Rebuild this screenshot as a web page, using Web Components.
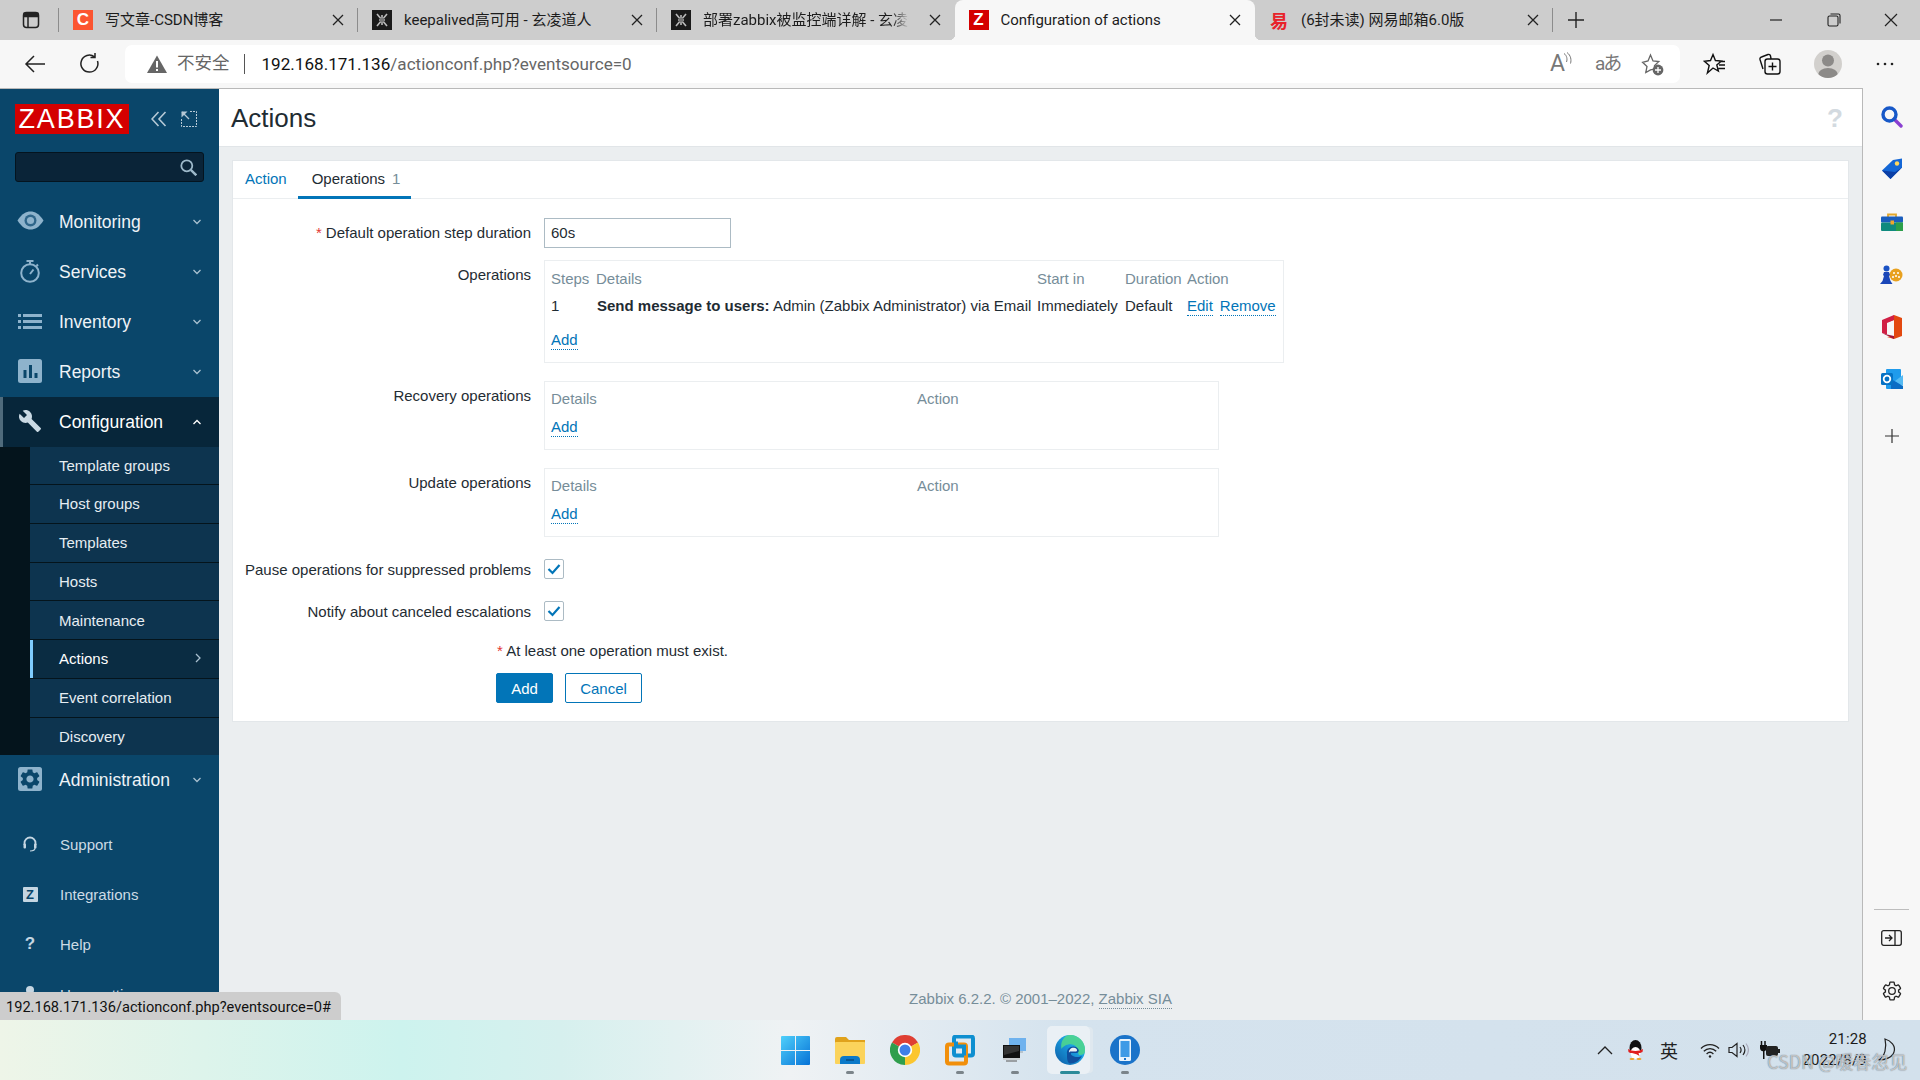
<!DOCTYPE html>
<html lang="en"><head><meta charset="utf-8"><title>Configuration of actions</title>
<style>
html,body{margin:0;padding:0;width:1920px;height:1080px;overflow:hidden;background:#fff}
svg{display:block}
</style></head><body>
<desktop-shell>
  <browser-tabs>
    <tab-side>
      <svg width="20" height="20" viewBox="0 0 20 20" fill="none" stroke="#222" stroke-width="1.5"><rect x="2.5" y="2.5" width="15" height="15" rx="3"/><path d="M3 6.5h14M7 6.5v11" /><path d="M2.5 2.5h15v4h-15z" fill="#222" stroke="none"/></svg>
    </tab-side>
    <browser-tab sep style="width:299px"><span slot="icon" style="display:flex;width:20px;height:20px;background:#fc5531;color:#fff;font:bold 17px 'Liberation Sans';align-items:center;justify-content:center">C</span>写文章-CSDN博客</browser-tab>
    <browser-tab sep style="width:299px"><svg slot="icon" width="20" height="20" viewBox="0 0 20 20"><rect width="20" height="20" fill="#1b1b1b"/><path d="M5 4l10 12M15 4L5 16M7 10h6M10 5v10" stroke="#bbb" stroke-width="1.6" fill="none"/><circle cx="10" cy="10" r="2.4" fill="#777"/></svg>keepalived高可用 - 玄凌道人</browser-tab>
    <browser-tab fade style="width:297.5px"><svg slot="icon" width="20" height="20" viewBox="0 0 20 20"><rect width="20" height="20" fill="#1b1b1b"/><path d="M5 4l10 12M15 4L5 16M7 10h6M10 5v10" stroke="#bbb" stroke-width="1.6" fill="none"/><circle cx="10" cy="10" r="2.4" fill="#777"/></svg>部署zabbix被监控端详解 - 玄凌道人</browser-tab>
    <browser-tab active style="width:300.5px"><span slot="icon" style="display:flex;width:20px;height:20px;background:#d40000;color:#fff;font:bold 17px 'Liberation Sans';align-items:center;justify-content:center">Z</span>Configuration of actions</browser-tab>
    <browser-tab sep style="width:298px"><span slot="icon" style="display:flex;width:20px;height:20px;color:#e8232a;font:bold 18px 'Noto Sans CJK SC';align-items:center;justify-content:center;line-height:20px">易</span>(6封未读) 网易邮箱6.0版</browser-tab>
    <tab-new>
      <svg width="18" height="18" viewBox="0 0 18 18" stroke="#222" stroke-width="1.4"><path d="M9 1v16M1 9h16"/></svg>
    </tab-new>
    <window-controls>
      <svg width="14" height="14" viewBox="0 0 14 14" stroke="#222" stroke-width="1.2"><path d="M1 7h12"/></svg>
      <svg width="14" height="14" viewBox="0 0 14 14" stroke="#222" stroke-width="1.1" fill="none"><rect x="1" y="3" width="10" height="10" rx="1.5"/><path d="M3.5 1h8a1.5 1.5 0 0 1 1.5 1.5v8"/></svg>
      <svg width="14" height="14" viewBox="0 0 14 14" stroke="#222" stroke-width="1.2"><path d="M1 1l12 12M13 1L1 13"/></svg>
    </window-controls>
  </browser-tabs>

  <browser-toolbar>
    <tool-btn style="margin-left:13px"><svg width="24" height="24" viewBox="0 0 24 24" fill="none" stroke="#222" stroke-width="1.5"><path d="M22 12H3M11 4l-8 8 8 8"/></svg></tool-btn>
    <tool-btn style="margin-left:11px"><svg width="24" height="24" viewBox="0 0 24 24" fill="none" stroke="#222" stroke-width="1.5"><path d="M19.5 9a8.5 8.5 0 1 1-3-4.2M17 1v4.5h-4.5"/></svg></tool-btn>
    <address-box>
      <svg slot="warn" width="20" height="18" viewBox="0 0 20 18"><path d="M10 0.5L20 18H0z" fill="#666"/><path d="M9 6h2v6.5H9zM9 14h2v2H9z" fill="#fff"/></svg>
      <span slot="insecure">不安全</span>
      <span slot="url"><span style="color:#111">192.168.171.136</span>/actionconf.php?eventsource=0</span>
      <span slot="tools" style="display:flex;width:24px;height:24px;position:relative;color:#777;font:23px/24px Roboto,'Liberation Sans'"><span>A</span><svg width="9" height="15" viewBox="0 0 9 15" fill="none" stroke="#777" style="margin-left:-2px"><path d="M1 1.500c3 2 3.500 6 2.500 8.500M4 .5c4 3 4.500 7.500 3.500 11"/></svg></span>
      <span slot="tools" style="color:#777;font:19px/24px Roboto,'Noto Sans CJK JP',sans-serif;width:24px;white-space:nowrap;letter-spacing:-2px">aあ</span>
      <svg slot="tools" width="24" height="24" viewBox="0 0 24 24" fill="none" stroke="#666" stroke-width="1.3"><path d="M10.5 3l2.5 6 5.8.6-4.3 4 .8 3-2.8.8-2 .5-4.7 2.6 1.2-6-4.4-4.2L8 9z"/><circle cx="18" cy="18" r="5.4" fill="#666" stroke="none"/><path d="M18 15v6M15 18h6" stroke="#fff"/></svg>
    </address-box>
    <tool-btn style="margin-left:13px"><svg width="24" height="24" viewBox="0 0 24 24" fill="none" stroke="#111" stroke-width="1.4"><path d="M10 2.500l2.400 6 6 .5-4.600 4 1.600 6L10 16l-5.600 5 1.800-7.500L1.500 9.300l6-.8zM16 9.500h6M16 13h6M15.500 16.500h6.500"/></svg></tool-btn>
    <tool-btn style="margin-left:11px"><svg width="24" height="24" viewBox="0 0 24 24" fill="none" stroke="#111" stroke-width="1.4"><rect x="7" y="7" width="15" height="15" rx="2.500"/><path d="M14.500 10.500v8M10.500 14.500h8M5 17L2 7.500a2 2 0 0 1 1.500-2.500L10 2.500a2 2 0 0 1 2.500 1.500l.6 3"/></svg></tool-btn>
    <tool-btn style="margin-left:14px"><svg width="28" height="28" viewBox="0 0 28 28"><defs><clipPath id="av"><circle cx="14" cy="14" r="14"/></clipPath></defs><circle cx="14" cy="14" r="14" fill="#d2d0cd"/><g clip-path="url(#av)" fill="#8c8a88"><circle cx="14" cy="10.500" r="6"/><ellipse cx="14" cy="25" rx="10" ry="7"/></g></svg></tool-btn>
    <tool-btn style="margin-left:13px"><svg width="18" height="4" viewBox="0 0 18 4" fill="#222"><circle cx="2" cy="2" r="1.300"/><circle cx="9" cy="2" r="1.300"/><circle cx="16" cy="2" r="1.300"/></svg></tool-btn>
  </browser-toolbar>

  <browser-body>
    <zbx-page>
      <zbx-sidebar>
        <zbx-brand>
          <svg slot="collapse" width="16" height="16" viewBox="0 0 16 16" fill="none" stroke="#b6c9d6" stroke-width="1.600"><path d="M7.500 1L1 8l6.500 7M14.500 1L8 8l6.500 7"/></svg>
          <svg slot="kiosk" width="16" height="16" viewBox="0 0 16 16" fill="none" stroke="#b6c9d6"><path d="M9 .5h6.500V15.500H.5V8" stroke-dasharray="2 1"/><path d="M1 1l7 7" stroke-width="1.300"/><path d="M.5 .5h6L.5 6.500z" fill="#b6c9d6" stroke="none"/></svg>
        </zbx-brand>
        <zbx-search><svg width="17" height="17" viewBox="0 0 17 17" fill="none" stroke="#9db9ca" stroke-width="1.800"><circle cx="6.800" cy="6.800" r="5.500"/><path d="M10.800 10.800l5.500 5.500" stroke-width="2.400"/></svg></zbx-search>
        <zbx-nav>
          <zbx-nav-item chev="down"><svg slot="icon" width="27" height="19" viewBox="0 0 27 19" style="margin-top:-3px"><path d="M.5 9.500C5 2.500 9 .5 13.500 .5S22 2.500 26.500 9.500C22 16.500 18 18.500 13.500 18.500S5 16.500 .5 9.500z" fill="#8eb3cc"/><circle cx="13.500" cy="9.500" r="6" fill="#2f668a"/><circle cx="13.500" cy="9.500" r="3.600" fill="#8eb3cc"/></svg>Monitoring</zbx-nav-item>
          <zbx-nav-item chev="down"><svg slot="icon" width="20" height="23" viewBox="0 0 20 23" fill="none" stroke="#8eb3cc" stroke-width="2" style="margin-top:-2px"><circle cx="10" cy="13" r="8.800"/><path d="M6.500 1h7M10 1v3M10 14l3.500-4.500M16.500 4.500l1.500 1.500" /></svg>Services</zbx-nav-item>
          <zbx-nav-item chev="down"><svg slot="icon" width="24" height="15" viewBox="0 0 24 15" fill="#8eb3cc" style="margin-top:-2px"><path d="M0 0h3v3H0zM5 0h19v3H5zM0 6h3v3H0zM5 6h19v3H5zM0 12h3v3H0zM5 12h19v3H5z"/></svg>Inventory</zbx-nav-item>
          <zbx-nav-item chev="down"><svg slot="icon" width="24" height="24" viewBox="0 0 24 24" style="margin-top:-2px"><rect width="24" height="24" rx="2.500" fill="#8eb3cc"/><path d="M5.500 11h3v8h-3zM11 6h3v13h-3zM16.500 14h3v5h-3z" fill="#0a466a"/></svg>Reports</zbx-nav-item>
          <zbx-nav-item chev="up" active><svg slot="icon" width="24" height="24" viewBox="0 0 24 24" fill="#c9d9e3" style="margin-top:-2px"><path d="M22.700 19l-9.100-9.100c.9-2.300.4-5-1.500-6.900-2-2-5-2.400-7.400-1.300L9 6 6 9 1.600 4.700C.4 7.100.9 10.100 2.900 12.100c1.900 1.900 4.600 2.400 6.900 1.500l9.100 9.100c.4.400 1 .4 1.400 0l2.300-2.300c.5-.4.5-1.100.1-1.400z"/></svg>Configuration</zbx-nav-item>
          <zbx-submenu>
            <zbx-sub-item>Template groups</zbx-sub-item>
            <zbx-sub-item>Host groups</zbx-sub-item>
            <zbx-sub-item>Templates</zbx-sub-item>
            <zbx-sub-item>Hosts</zbx-sub-item>
            <zbx-sub-item>Maintenance</zbx-sub-item>
            <zbx-sub-item current>Actions</zbx-sub-item>
            <zbx-sub-item>Event correlation</zbx-sub-item>
            <zbx-sub-item>Discovery</zbx-sub-item>
          </zbx-submenu>
          <zbx-nav-item chev="down"><svg slot="icon" width="24" height="24" viewBox="0 0 24 24" style="margin-top:-2px"><rect width="24" height="24" rx="2.500" fill="#8eb3cc"/><path fill="#0a466a" d="M19.140 12.940c.04-.3.06-.61.06-.94 0-.32-.02-.64-.07-.94l2.030-1.580c.18-.14.23-.41.12-.61l-1.920-3.320c-.12-.22-.37-.29-.59-.22l-2.390.96c-.5-.38-1.030-.7-1.620-.94l-.36-2.540c-.04-.24-.24-.41-.48-.41h-3.840c-.24 0-.43.17-.47.41l-.36 2.540c-.59.24-1.130.57-1.620.94l-2.390-.96c-.22-.08-.47 0-.59.22L2.740 8.870c-.12.21-.08.47.12.61l2.030 1.580c-.05.3-.09.63-.09.94s.02.64.07.94l-2.030 1.580c-.18.14-.23.41-.12.61l1.920 3.320c.12.22.37.29.59.22l2.390-.96c.5.38 1.030.7 1.620.94l.36 2.540c.05.24.24.41.48.41h3.840c.24 0 .44-.17.47-.41l.36-2.540c.59-.24 1.130-.56 1.620-.94l2.390.96c.22.08.47 0 .59-.22l1.920-3.320c.12-.22.07-.47-.12-.61l-2.010-1.580zM12 15.600c-1.980 0-3.600-1.620-3.600-3.600s1.620-3.600 3.600-3.600 3.600 1.620 3.600 3.600-1.620 3.600-3.600 3.600z"/></svg>Administration</zbx-nav-item>
          <zbx-nav-gap></zbx-nav-gap>
          <zbx-nav-item small><svg slot="icon" width="14" height="16" viewBox="0 0 14 16" fill="none" stroke="#c5d6e2" stroke-width="1.800"><path d="M1.500 9V7a5.500 5.500 0 0 1 11 0v2"/><rect x=".5" y="7.500" width="2.500" height="5" rx="1" fill="#c5d6e2" stroke="none"/><rect x="11" y="7.500" width="2.500" height="5" rx="1" fill="#c5d6e2" stroke="none"/><path d="M12 12c0 2-2 3-5 3" stroke-width="1.200"/></svg>Support</zbx-nav-item>
          <zbx-nav-item small><span slot="icon" style="display:flex;width:15px;height:15px;background:#c5d6e2;color:#0a466a;border-radius:1px;font:bold 13px 'Liberation Sans';align-items:center;justify-content:center">Z</span>Integrations</zbx-nav-item>
          <zbx-nav-item small><span slot="icon" style="color:#c5d6e2;font:bold 17px 'Liberation Sans'">?</span>Help</zbx-nav-item>
          <zbx-nav-item small><svg slot="icon" width="14" height="16" viewBox="0 0 14 16" fill="#c5d6e2"><circle cx="7" cy="4" r="4"/><path d="M0 16c0-5 3-7 7-7s7 2 7 7z"/></svg>User settings</zbx-nav-item>
        </zbx-nav>
      </zbx-sidebar>
      <zbx-main>
        <zbx-header>Actions</zbx-header>
        <zbx-card>
          <zbx-tabs>
            <zbx-tab>Action</zbx-tab>
            <zbx-tab selected count="1">Operations</zbx-tab>
          </zbx-tabs>
          <zbx-form>
            <form-row required label="Default operation step duration" style="margin-top:0"><text-field>60s</text-field></form-row>
            <form-row label="Operations" style="margin-top:12px">
              <op-box style="width:740px;height:103px" variant="full">
                <op-grid cols="45px 441px 88px 62px 1fr" muted><span>Steps</span><span>Details</span><span>Start in</span><span>Duration</span><span>Action</span></op-grid>
                <op-grid cols="45px 441px 88px 62px 1fr" style="margin-top:9px"><span>1</span><span><b style="padding-left:1px">Send message to users:</b> Admin (Zabbix Administrator) via Email</span><span>Immediately</span><span>Default</span><span style="white-space:nowrap"><zbx-link>Edit</zbx-link><zbx-link style="margin-left:7px">Remove</zbx-link></span></op-grid>
                <div style="margin-top:16px"><zbx-link>Add</zbx-link></div>
              </op-box>
            </form-row>
            <form-row label="Recovery operations" style="margin-top:18px">
              <op-box style="width:675px;height:69px">
                <op-grid cols="366px 1fr" muted><span>Details</span><span>Action</span></op-grid>
                <div style="margin-top:10px"><zbx-link>Add</zbx-link></div>
              </op-box>
            </form-row>
            <form-row label="Update operations" style="margin-top:18px">
              <op-box style="width:675px;height:69px">
                <op-grid cols="366px 1fr" muted><span>Details</span><span>Action</span></op-grid>
                <div style="margin-top:10px"><zbx-link>Add</zbx-link></div>
              </op-box>
            </form-row>
            <form-row compact label="Pause operations for suppressed problems" style="margin-top:22px"><check-box></check-box></form-row>
            <form-row compact label="Notify about canceled escalations" style="margin-top:22px"><check-box></check-box></form-row>
            <form-note><span style="color:#e33734">*</span> At least one operation must exist.</form-note>
            <form-actions><zbx-button primary>Add</zbx-button><zbx-button>Cancel</zbx-button></form-actions>
          </zbx-form>
        </zbx-card>
        <zbx-footer>Zabbix 6.2.2. © 2001–2022, <zbx-link footer>Zabbix SIA</zbx-link></zbx-footer>
      </zbx-main>
    </zbx-page>
    <edge-rail>
      <rail-cell><svg width="22" height="22" viewBox="0 0 22 22" fill="none"><path d="M13 13l7 7" stroke="#8a3fd0" stroke-width="3.400" stroke-linecap="round"/><circle cx="8.500" cy="8.500" r="6.500" stroke="#1758c8" stroke-width="3.400"/></svg></rail-cell>
      <rail-cell><svg width="22" height="22" viewBox="0 0 22 22"><path d="M1 12.500L12 2l9-1.500v9L9.500 21z" fill="#1467d6"/><path d="M1 12.500L9.500 21 21 9.500 14 14z" fill="#0b3fa6"/><circle cx="16" cy="5.500" r="2.200" fill="#ffd75e"/></svg></rail-cell>
      <rail-cell><svg width="22" height="18" viewBox="0 0 22 18"><path d="M7 4V1.500h8V4" fill="none" stroke="#e3a72a" stroke-width="1.800"/><rect y="3.500" width="22" height="6" rx="1" fill="#1a5dbd"/><rect y="9.500" width="22" height="8.500" rx="1" fill="#0f8a7e"/><rect x="15" y="9.500" width="7" height="8.500" fill="#2c9f4a"/><rect x="9.500" y="7.500" width="3.500" height="4" fill="#f0a62a"/></svg></rail-cell>
      <rail-cell><svg width="23" height="19" viewBox="0 0 23 19"><circle cx="16" cy="10" r="6.500" fill="#e8a11f"/><g fill="#fff"><circle cx="14" cy="8" r="1"/><circle cx="18" cy="8" r="1"/><circle cx="16" cy="11" r="1"/><circle cx="13" cy="12" r="1"/><circle cx="19" cy="12" r="1"/></g><circle cx="6.500" cy="3.500" r="3" fill="#1a52c4"/><path d="M4 7h5l1 3-1 1 1.500 5 2 3H0l2.500-3L4 11 3 10z" fill="#1a46b8"/></svg></rail-cell>
      <rail-cell><svg width="21" height="24" viewBox="0 0 21 24"><path d="M13 0l8 3v18l-8 3-7-2 7-1V5L7 7z" fill="#e3480f"/><path d="M13 0L1 5v13l5 1.500V8l7-3z" fill="#d12045"/><path d="M6 19.500L1 18l12 6 0-3z" fill="#a3153a"/></svg></rail-cell>
      <rail-cell><svg width="22" height="21" viewBox="0 0 22 21"><rect x="5" y="0" width="15" height="20" rx="1" fill="#1f9bec"/><path d="M10 10l12 7v3H10z" fill="#0b6cc4"/><path d="M22 6l-8 6 8 5z" fill="#55baf2"/><rect y="4" width="12" height="12" rx="1.500" fill="#0672c4"/><circle cx="6" cy="10" r="3.300" fill="none" stroke="#fff" stroke-width="1.800"/></svg></rail-cell>
      <rail-cell style="margin-top:4px"><svg width="16" height="16" viewBox="0 0 16 16" stroke="#333" stroke-width="1.200"><path d="M8 1v14M1 8h14"/></svg></rail-cell>
      <rail-line></rail-line>
      <rail-cell><svg width="21" height="16" viewBox="0 0 21 16" fill="none" stroke="#222" stroke-width="1.300"><rect x=".7" y=".7" width="19.600" height="14.600" rx="2"/><path d="M14 1v14M4 8h7M8 5l3 3-3 3"/></svg></rail-cell>
      <rail-cell><svg width="22" height="22" viewBox="0 0 24 24" fill="none" stroke="#222" stroke-width="1.400"><path d="M19.140 12.940c.04-.3.06-.61.06-.94 0-.32-.02-.64-.07-.94l2.030-1.580c.18-.14.23-.41.12-.61l-1.920-3.320c-.12-.22-.37-.29-.59-.22l-2.390.96c-.5-.38-1.030-.7-1.620-.94l-.36-2.540c-.04-.24-.24-.41-.48-.41h-3.840c-.24 0-.43.17-.47.41l-.36 2.540c-.59.24-1.130.57-1.620.94l-2.390-.96c-.22-.08-.47 0-.59.22L2.740 8.870c-.12.21-.08.47.12.61l2.030 1.580c-.05.3-.09.63-.09.94s.02.64.07.94l-2.030 1.580c-.18.14-.23.41-.12.61l1.920 3.320c.12.22.37.29.59.22l2.390-.96c.5.38 1.030.7 1.620.94l.36 2.540c.05.24.24.41.48.41h3.840c.24 0 .44-.17.47-.41l.36-2.540c.59-.24 1.130-.56 1.620-.94l2.390.96c.22.08.47 0 .59-.22l1.920-3.320c.12-.22.07-.47-.12-.61l-2.010-1.580zM12 15.600c-1.980 0-3.600-1.620-3.600-3.600s1.620-3.600 3.600-3.600 3.600 1.620 3.600 3.600-1.620 3.600-3.600 3.600z"/></svg></rail-cell>
    </edge-rail>
  </browser-body>

  <win-taskbar>
    <task-app><svg width="29" height="29" viewBox="0 0 29 29"><defs><linearGradient id="w" x1="0" y1="0" x2="1" y2="1"><stop offset="0" stop-color="#4fd0fb"/><stop offset="1" stop-color="#0672d6"/></linearGradient></defs><path fill="url(#w)" d="M1 0h13v14H0V1a1 1 0 0 1 1-1zM15 0h13a1 1 0 0 1 1 1v13H15zM0 15h14v14H1a1 1 0 0 1-1-1zM15 15h14v13a1 1 0 0 1-1 1H15z"/></svg></task-app>
    <task-app running><svg width="30" height="27" viewBox="0 0 30 27"><path d="M0 2a2 2 0 0 1 2-2h9l3 3h16v5H0z" fill="#e0a21c"/><rect y="5" width="30" height="22" rx="1" fill="#fbd35b"/><path d="M5 27v-4a4 4 0 0 1 4-4h12a4 4 0 0 1 4 4v4z" fill="#0b79c9"/><path d="M11 23h8" stroke="#06497f" stroke-width="1.400"/></svg></task-app>
    <task-app><svg width="30" height="30" viewBox="0 0 30 30"><path d="M15 15L2 7.500A15 15 0 0 1 28 7.500z" fill="#df3f33"/><path d="M15 15L28 7.500A15 15 0 0 1 15 30z" fill="#fbc62f"/><path d="M15 15L15 30A15 15 0 0 1 2 7.500z" fill="#2f9e4d"/><circle cx="15" cy="15" r="7.200" fill="#fff"/><circle cx="15" cy="15" r="5.500" fill="#3f7fe8"/></svg></task-app>
    <task-app running><svg width="30" height="31" viewBox="0 0 30 31" fill="none"><rect x="9" y="1.500" width="19" height="19" rx="2" stroke="#0e8fd0" stroke-width="4"/><rect x="2" y="9.500" width="19" height="19" rx="2" stroke="#f18f0b" stroke-width="4"/><path d="M11 9.500v-3M9 11.500h10v9" stroke="#0e8fd0" stroke-width="4"/></svg></task-app>
    <task-app running><svg width="24" height="25" viewBox="0 0 24 25"><rect x="6" y="0" width="17" height="13" fill="#6fb2ee"/><path d="M16 13h4v2h-4z" fill="#b8c3cc"/><rect x="0" y="7" width="17" height="13" fill="#111"/><path d="M1 8h15v5L1 17z" fill="#333"/><rect x="0" y="20" width="17" height="2" fill="#c9cdd0"/><rect x="3" y="22" width="11" height="2" fill="#9a9fa3"/></svg></task-app>
    <task-app edge><svg width="30" height="30" viewBox="0 0 30 30"><defs><linearGradient id="e1" x1="0" y1="1" x2="1" y2="0"><stop offset="0" stop-color="#0c59a4"/><stop offset=".6" stop-color="#1ba1e2"/><stop offset="1" stop-color="#37c6d0"/></linearGradient></defs><circle cx="15" cy="15" r="15" fill="url(#e1)"/><path d="M14 0A15 15 0 0 1 30 16c0 3-3 4.500-6 4-2-4-1-8-5-10-5-2-11 1-12.500 4C5 7 9 1 14 0z" fill="#4ed58e" opacity=".9"/><path d="M12 19c-1-6 5-9 9-7 3 1.500 4 5 1 6h-6c-1 2 3 4 6 4 2 0 4-.5 5-1.500-2 5-7 8-12 8-3-1-3-5-3-9.500z" fill="#0f4f9e"/><path d="M14 18c-.5-4 3-6 6-5 2 .5 3 3 1 3.500h-5c-1.500 0-2 .7-2 1.500z" fill="#eaf0f5"/></svg></task-app>
    <task-app running><svg width="30" height="30" viewBox="0 0 30 30"><circle cx="15" cy="15" r="15" fill="#1a73c9"/><rect x="9" y="4" width="12" height="22" rx="1.500" fill="#e8f3fc"/><rect x="10.500" y="6" width="9" height="16" fill="#3f9be6"/><rect x="14" y="23" width="2" height="2" fill="#1a73c9"/></svg></task-app>
    <sys-tray>
      <tray-cell style="width:30px"><svg width="16" height="9" viewBox="0 0 16 9" fill="none" stroke="#222" stroke-width="1.300"><path d="M1 8l7-7 7 7"/></svg></tray-cell>
      <tray-cell style="width:30px"><svg width="17" height="20" viewBox="0 0 17 20"><ellipse cx="8.500" cy="8" rx="6" ry="8" fill="#111"/><ellipse cx="8.500" cy="13" rx="5" ry="6" fill="#fff"/><path d="M1 9c4 2.500 11 2.500 15 0l-.5 3c-2 1-3 1-4 1l1 3-3-1.800L5 13c-1 0-2.500 0-3.500-1z" fill="#e02020"/><ellipse cx="5" cy="19" rx="2.500" ry="1" fill="#f0a020"/><ellipse cx="12" cy="19" rx="2.500" ry="1" fill="#f0a020"/></svg></tray-cell>
      <tray-cell style="width:38px;font:18px 'Noto Sans CJK SC',sans-serif;color:#222">英</tray-cell>
      <tray-cell style="width:28px;margin-left:8px"><svg width="20" height="15" viewBox="0 0 20 15" fill="none" stroke="#222" stroke-width="1.300"><path d="M1 5.500c5-5.300 13-5.300 18 0M3.800 8.300c3.500-3.600 8.900-3.600 12.400 0M6.600 11c2-2 4.800-2 6.800 0"/><circle cx="10" cy="13.500" r="1.200" fill="#222" stroke="none"/></svg></tray-cell>
      <tray-cell style="width:28px"><svg width="21" height="16" viewBox="0 0 21 16" fill="none" stroke="#222" stroke-width="1.200"><path d="M1 5.500h3L9 1.500v13L4 10.500H1z"/><path d="M12 5c1.300 1.800 1.300 4.200 0 6M15 3c2.300 3 2.300 7 0 10"/><path d="M18 1.500c3 4 3 9 0 13" stroke="#aab"/></svg></tray-cell>
      <tray-cell style="width:36px"><svg width="20" height="18" viewBox="0 0 20 18"><path d="M1.500 0v4M5 0v4" stroke="#111" stroke-width="1.500"/><path d="M0 4h7v3a3.500 3.500 0 0 1-2.500 3.300V18H3v-7.700A3.500 3.500 0 0 1 0 7z" fill="#111"/><rect x="6" y="5" width="12" height="10" rx="2" fill="#222"/><rect x="18" y="8" width="2" height="4" fill="#222"/></svg></tray-cell>
      <tray-clock><span>21:28</span><span>2022/8/9</span></tray-clock>
    </sys-tray>
    <svg data-moon width="22" height="26" viewBox="0 0 22 26" fill="none" stroke="#222" stroke-width="1.200" style="position:absolute;left:1876px;top:18px"><path d="M9 1c6 1.500 11 7 9 13-1.500 5-8 8-15.500 8C9 19 11 9 9 1z"/></svg>
  </win-taskbar>

  <status-bubble>192.168.171.136/actionconf.php?eventsource=0#</status-bubble>
  <csdn-mark>CSDN @暖春忽见</csdn-mark>
</desktop-shell>

<script>
const UI='Roboto,"Noto Sans CJK SC",sans-serif';
const ZB='"Liberation Sans","Noto Sans CJK SC",sans-serif';
function make(name,css,html='<slot></slot>'){
  const t=document.createElement('template');
  t.innerHTML=`<style>${css}</style>${html}`;
  customElements.define(name,class extends HTMLElement{
    constructor(){super();this.attachShadow({mode:'open'}).appendChild(t.content.cloneNode(true));}
    connectedCallback(){
      const s=this.shadowRoot;
      s.querySelectorAll('[data-attr]').forEach(n=>{n.textContent=this.getAttribute(n.dataset.attr)||''});
      if(this.hasAttribute('cols'))this.style.gridTemplateColumns=this.getAttribute('cols');
    }
  });
}
const close='<svg class="x" width="12" height="12" viewBox="0 0 12 12" stroke="#222" stroke-width="1.300"><path d="M1 1l10 10M11 1L1 11"/></svg>';

make('desktop-shell',`:host{display:flex;flex-direction:column;position:relative;width:1920px;height:1080px;overflow:hidden;font-family:${ZB}}`);
make('browser-tabs',`:host{display:flex;height:40px;background:#cdcdcd;font:15px ${UI};color:#1c1c1c}`);
make('tab-side',`:host{display:flex;width:59px;height:40px;align-items:center;padding-left:21px;box-sizing:border-box;position:relative}
 :host::after{content:"";position:absolute;right:0;top:8px;height:24px;width:1px;background:#8c8c8c}`);
make('browser-tab',`:host{display:block;height:40px;box-sizing:border-box;position:relative;flex:none}
 .t{display:flex;align-items:center;height:100%;padding:0 14px;box-sizing:border-box;gap:12px}
 .fav{width:20px;height:20px;flex:none;display:block}
 .title{flex:1;min-width:0;overflow:hidden;white-space:nowrap;line-height:20px;height:20px;margin-top:-1px}
 .x{flex:none;margin-left:8px;margin-right:0}
 :host([sep]) .t::after{content:"";position:absolute;right:0;top:8px;height:24px;width:1px;background:#8c8c8c}
 :host([fade]) .title{-webkit-mask-image:linear-gradient(90deg,#000 92%,transparent);mask-image:linear-gradient(90deg,#000 92%,transparent)}
 :host([active]){background:#f7f7f7;border-radius:8px 8px 0 0}
 :host([active])::before,:host([active])::after{content:"";position:absolute;bottom:0;width:6px;height:6px}
 :host([active])::before{left:-6px;background:radial-gradient(circle at 0 0,transparent 6px,#f7f7f7 6.500px)}
 :host([active])::after{right:-6px;background:radial-gradient(circle at 100% 0,transparent 6px,#f7f7f7 6.500px)}`,
 `<div class="t"><span class="fav"><slot name="icon"></slot></span><span class="title"><slot></slot></span>${close}</div>`);
make('tab-new',`:host{display:flex;width:45px;height:40px;align-items:center;justify-content:center}`);
make('window-controls',`:host{display:flex;margin-left:auto;width:129px;height:40px;align-items:center;justify-content:space-between;padding:0 22px 0 0;box-sizing:content-box}
 ::slotted(svg){width:14px}`);
make('browser-toolbar',`:host{display:flex;height:48px;background:#f7f7f7;align-items:flex-start;padding-top:5px;box-sizing:border-box}`);
make('tool-btn',`:host{display:flex;width:44px;height:38px;align-items:center;justify-content:center;flex:none}`);
make('address-box',`:host{display:flex;align-items:center;width:1555px;height:38px;margin-left:13px;background:#fff;border-radius:7px;box-sizing:border-box;padding:0 16px 0 22px;font:17.100px/24px ${UI};color:#666;flex:none}
 .ins{margin-left:10px;color:#666;font-size:17.500px;height:24px;margin-top:-2px}
 .bar{width:1px;height:20px;background:#555;margin:0 17px 0 14px}
 .sp{flex:1}
 .tools{display:flex;gap:21px;align-items:center}`,
 `<slot name="warn"></slot><span class="ins"><slot name="insecure"></slot></span><span class="bar"></span><slot name="url"></slot><span class="sp"></span><span class="tools"><slot name="tools"></slot></span>`);
make('browser-body',`:host{display:flex;height:932px;background:#f7f7f7}`);
make('zbx-page',`:host{display:flex;width:1863px;height:932px;box-sizing:border-box;border-top:1px solid #b9b9b9;border-right:1px solid #b9b9b9;flex:none}`);
make('zbx-sidebar',`:host{display:block;width:219px;flex:none;background:#0a466a;overflow:hidden;color:#f2f6f9}`);
make('zbx-brand',`:host{display:flex;align-items:center;padding:15px 0 0 15px}
 .logo{display:block;width:114px;height:30px;background:#d40000;color:#fff;font:27px/31px "Liberation Sans",sans-serif;letter-spacing:1.800px;text-align:center;flex:none}
 .c{display:block;margin-left:22px}.k{display:block;margin-left:14px}`,
 `<span class="logo">ZABBIX</span><span class="c"><slot name="collapse"></slot></span><span class="k"><slot name="kiosk"></slot></span>`);
make('zbx-search',`:host{display:flex;align-items:center;justify-content:flex-end;width:189px;height:30px;margin:18px 0 15px 15px;box-sizing:border-box;background:#0a2438;border:1px solid #04141f;border-radius:3px;padding-right:6px}`);
make('zbx-nav',`:host{display:block}`);
make('zbx-nav-item',`:host{display:flex;align-items:center;height:50px;position:relative;font:17.500px "Liberation Sans",sans-serif;color:#eef3f7}
 .i{display:flex;width:59px;align-items:center;justify-content:center;flex:none;box-sizing:border-box;padding-left:1px}
 .c{margin-left:auto;margin-right:17px;width:10px;height:6px;flex:none;display:none}
 :host([chev]) .c{display:block}
 :host([chev="up"]) .c{transform:scaleY(-1)}
 :host([active]){background:#07263a;color:#fff}
 :host([active]) .c{stroke:#fff}
 :host([active])::before{content:"";position:absolute;left:0;top:0;bottom:0;width:3px;background:#4f6b7c}
 :host([small]){font-size:15px;color:#cddbe5}
 :host([small]) .t{margin-left:1px}`,
 `<span class="i"><slot name="icon"></slot></span><span class="t"><slot></slot></span><svg class="c" viewBox="0 0 10 6" fill="none" stroke="#a9c0cf" stroke-width="1.300"><path d="M1.500 1L5 4.500 8.500 1"/></svg>`);
make('zbx-nav-gap',`:host{display:block;height:14px}`);
make('zbx-submenu',`:host{display:flex;flex-direction:column;height:308px;padding-left:30px;background:#04141c;box-sizing:border-box}`);
make('zbx-sub-item',`:host{display:flex;flex:none;height:39px;align-items:center;box-sizing:border-box;background:#0d344f;border-bottom:1px solid #04141c;padding-left:29px;padding-bottom:2px;font:15px "Liberation Sans",sans-serif;color:#e6edf2;position:relative}
 :host(:nth-child(1)),:host(:nth-child(4)){height:38px;padding-bottom:0}
 :host(:nth-child(5)){padding-bottom:0}
 :host(:last-child){border-bottom:0;height:37px;padding-bottom:0}
 .c{display:none;margin-left:auto;margin-right:18px;width:6px;height:10px}
 :host([current]){background:#0a2c42;color:#fff;box-shadow:inset 3px 0 0 #7fcdff}
 :host([current]) .c{display:block}`,
 `<slot></slot><svg class="c" viewBox="0 0 6 10" fill="none" stroke="#a9c0cf" stroke-width="1.300"><path d="M1 1l4 4-4 4"/></svg>`);
make('zbx-main',`:host{display:flex;flex-direction:column;flex:1;min-width:0;background:#ebeef0;font:15px/18px "Liberation Sans",sans-serif;color:#1f2c33}`);
make('zbx-header',`:host{display:flex;align-items:center;justify-content:space-between;height:58px;box-sizing:border-box;background:#fff;border-bottom:1px solid #e1e5e8;padding:0 19px 0 12px;font-size:26px;color:#1f2c33;flex:none}
 .h{color:#d3dae0;font-size:26px;font-weight:bold}`,`<span><slot></slot></span><span class="h">?</span>`);
make('zbx-card',`:host{display:block;height:562px;margin:13px 13px 0;box-sizing:border-box;background:#fff;border:1px solid #e3e7ea;flex:none}`);
make('zbx-tabs',`:host{display:flex;height:38px;box-sizing:border-box;border-bottom:1px solid #ebeef0;gap:10px}`);
make('zbx-tab',`:host{display:flex;align-items:center;height:38px;padding:0 0 2px 12px;box-sizing:border-box;color:#0275b8;white-space:nowrap}
 .n{display:none;margin-left:7px;color:#768d99}
 :host([selected]){color:#1f2c33;box-shadow:inset 0 -3px 0 #0275b8;padding:0 11px 2px 14px;margin-left:1px}
 :host([selected]) .n{display:inline}`,`<slot></slot><span class="n" data-attr="count"></span>`);
make('zbx-form',`:host{display:block;padding-top:19px}`);
make('form-row',`:host{display:grid;grid-template-columns:298px 1fr;column-gap:13px;align-items:start}
 .l{padding-top:6px;text-align:right;white-space:nowrap;line-height:18px}
 :host([compact]) .l{padding-top:2px}
 .r{display:none;color:#e33734;margin-right:4px}
 :host([required]) .r{display:inline}`,
 `<div class="l"><span class="r">*</span><span data-attr="label"></span></div><div><slot></slot></div>`);
make('text-field',`:host{display:block;width:187px;height:30px;box-sizing:border-box;border:1px solid #acbbc4;padding:5px 6px;line-height:18px;color:#1f2c33}`);
make('op-box',`:host{display:block;box-sizing:border-box;border:1px solid #ebeef0;padding:8px 6px 0}
 :host([variant="full"]){padding-top:9px}`);
make('op-grid',`:host{display:grid;line-height:18px;white-space:nowrap}
 :host([muted]){color:#768d99}`);
make('zbx-link',`:host{display:inline;color:#0275b8;border-bottom:1px dotted #0275b8;padding-bottom:1px}
 :host([footer]){color:#768d99;border-bottom-color:#768d99}`);
make('check-box',`:host{display:flex;width:20px;height:20px;box-sizing:border-box;border:1px solid #acbbc4;border-radius:2px;align-items:center;justify-content:center}`,
 `<svg width="14" height="12" viewBox="0 0 14 12" fill="none" stroke="#0275b8" stroke-width="2.200"><path d="M1.500 6l4 4 7-8"/></svg>`);
make('form-note',`:host{display:block;margin:21px 0 0 264px;line-height:18px}`);
make('form-actions',`:host{display:flex;gap:12px;margin:13px 0 0 263px}`);
make('zbx-button',`:host{display:flex;align-items:center;justify-content:center;height:30px;box-sizing:border-box;width:77px;padding-top:1px;background:#fff;border:1px solid #0275b8;border-radius:2px;color:#0275b8;font-size:15px}
 :host([primary]){width:57px;background:#0275b8;color:#fff}`);
make('zbx-footer',`:host{display:block;margin-top:auto;padding-bottom:12px;text-align:center;color:#768d99;line-height:18px}`);
make('edge-rail',`:host{display:flex;flex-direction:column;width:57px;flex:none;background:#f7f7f7;padding:2.500px 0 3px;box-sizing:border-box;height:932px}`);
make('rail-cell',`:host{display:flex;height:52.500px;align-items:center;justify-content:center;flex:none}`);
make('rail-line',`:host{display:block;margin:auto 11px 2px;height:1px;background:#bdbdbd;flex:none}`);
make('win-taskbar',`:host{display:flex;height:60px;position:relative;box-sizing:border-box;padding-left:767.500px;align-items:stretch;background:linear-gradient(90deg,#eef5e8 0,#cdf3ee 400px,#d6f0ee 560px,#eff2f4 790px,#e4ecf2 900px,#d5e3ee 1060px,#d3e1ec 1920px);flex:none}`);
make('task-app',`:host{display:flex;width:55px;height:60px;align-items:center;justify-content:center;position:relative;flex:none}
 :host([running])::after{content:"";position:absolute;left:23.500px;top:51px;width:8px;height:3px;border-radius:2px;background:#7b848a}
 :host([edge])::before{content:"";position:absolute;left:4.500px;top:6px;width:43px;height:48px;border-radius:5px;background:#eaf0f5;box-shadow:4px 0 0 -1px #dfe8ef}
 :host([edge])::after{content:"";position:absolute;left:17.500px;top:51px;width:20px;height:3px;border-radius:2px;background:#2b8a99}
 ::slotted(svg){position:relative}`);
make('sys-tray',`:host{display:flex;position:absolute;left:1590px;top:0;height:60px;align-items:center}`);
make('tray-cell',`:host{display:flex;height:60px;align-items:center;justify-content:center;flex:none}`);
make('tray-clock',`:host{display:flex;flex-direction:column;width:79px;align-items:flex-end;font:15px/21px ${UI};color:#1b1b1b;letter-spacing:.2px}
 ::slotted(span){display:block}`);
make('status-bubble',`:host{position:absolute;left:0;top:992px;width:341px;height:28px;box-sizing:border-box;background:#cdcdcd;border-radius:0 6px 0 0;padding-left:6px;font:14.600px/30px ${UI};color:#111;white-space:nowrap}`);
make('csdn-mark',`:host{position:absolute;left:1767px;top:1048px;font:18px/26px "Noto Sans CJK SC",sans-serif;color:rgba(255,255,255,.6);text-shadow:0 0 1px rgba(50,60,70,.85);white-space:nowrap}`);
</script>
</body></html>
